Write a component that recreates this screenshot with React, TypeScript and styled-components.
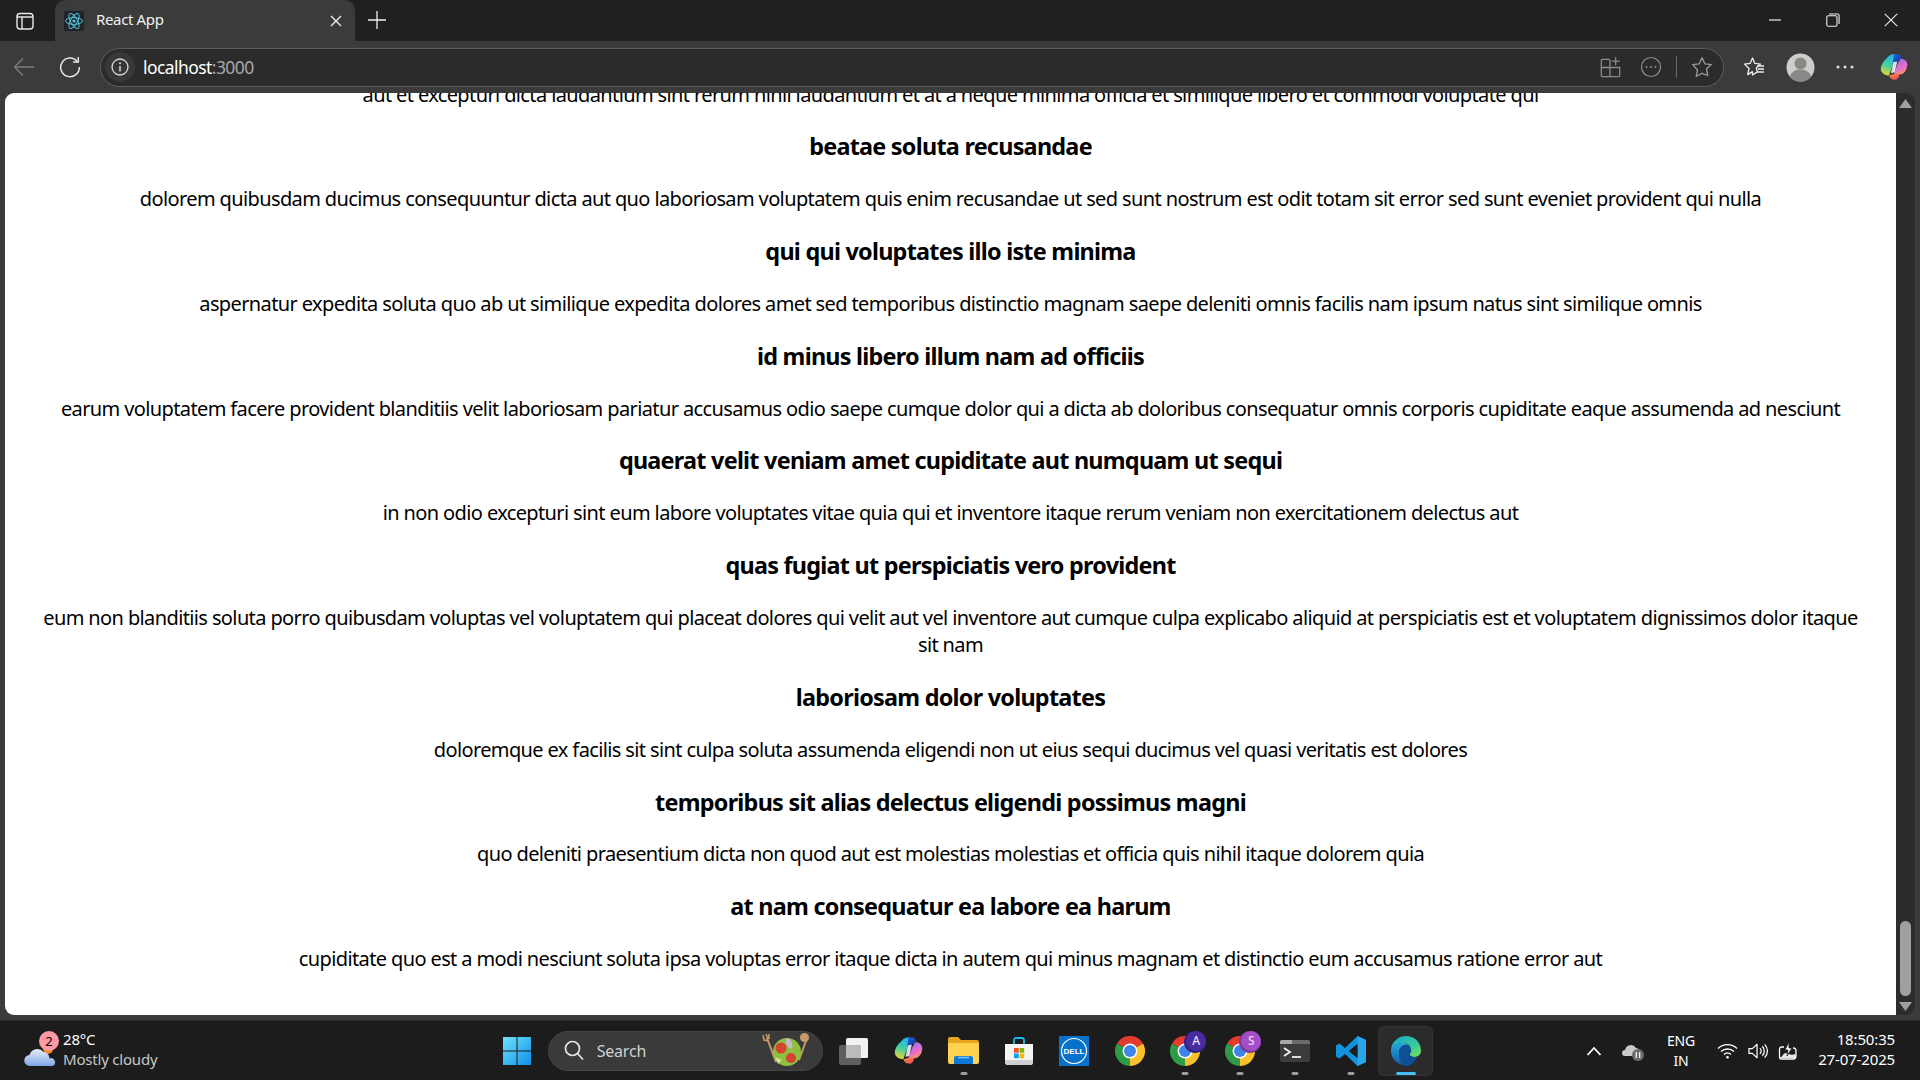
import React from "react";
import styled, { createGlobalStyle } from "styled-components";

const Global = createGlobalStyle`
  html, body { margin: 0; padding: 0; height: 100%; overflow: hidden; background: #3b3b3b; }
  #root { height: 100%; }
  * { box-sizing: border-box; }
`;

const FONT = `"Noto Sans", "Open Sans", sans-serif`;

const Shell = styled.div`
  width: 1920px; height: 1080px; display: flex; flex-direction: column;
  font-family: ${FONT}; background: #3b3b3b; overflow: hidden;
`;
const TabStrip = styled.div`
  height: 41px; flex: none; background: #202020; display: flex; align-items: stretch; color: #fff;
`;
const SidebarBtn = styled.div`
  width: 55px; flex: none; display: flex; align-items: center; justify-content: center; padding-right: 6px;
`;
const Tab = styled.div`
  width: 300px; flex: none; background: #3b3b3b; border-radius: 10px 10px 0 0; display: flex;
  align-items: center; padding: 0 13px 0 9px; position: relative;
`;
const TabTitle = styled.span`
  font-size: 15px; letter-spacing: -0.35px; color: #f2f2f2; margin-left: 12px; flex: 1; position: relative; top: -2px;
`;
const NewTab = styled.div`
  width: 44px; flex: none; display: flex; align-items: center; justify-content: center; padding-bottom: 2px;
`;
const Spacer = styled.div`flex: 1;`;
const WinControls = styled.div`
  display: flex; align-items: center; width: 174px; flex: none; padding-bottom: 2px;
`;
const WinBtn = styled.div`
  width: 58px; display: flex; align-items: center; justify-content: center;
`;
const Toolbar = styled.div`
  height: 52px; flex: none; background: #3b3b3b; display: flex; align-items: center; position: relative;
`;
const NavBtn = styled.div`
  width: ${p => p.$w || 45}px; flex: none; display: flex; align-items: center; justify-content: center;
`;
const AddressBar = styled.div`
  width: 1624px; height: 39px; flex: none; margin-left: 8px; border: 1px solid #5e5e5e; border-radius: 20px;
  background: #2b2b2b; display: flex; align-items: center; padding: 0 10px 0 4px;
`;
const InfoBadge = styled.div`
  width: 30px; height: 30px; border-radius: 50%; background: #383838; flex: none;
  display: flex; align-items: center; justify-content: center;
`;
const Url = styled.div`
  margin-left: 8px; font-size: 17.5px; letter-spacing: -0.57px; color: #fff; flex: 1;
  span { color: #a8a8a8; }
`;
const AddrIcons = styled.div`display: flex; align-items: center; gap: 14px;`;
const ExtSlot = styled.div`display: flex; margin-right: 4px;`;
const Divider = styled.div`width: 1px; height: 22px; background: #6a6a6a;`;
const ToolRight = styled.div`
  display: flex; align-items: center; flex: 1; padding: 0 13px 0 19px;
`;
const Slot = styled.div`width: ${p => p.$w}px; flex: none; display: flex;`;
const Viewport = styled.div`
  height: 922px; flex: none; display: flex; padding-left: 5px; padding-right: 5px;
`;
const Page = styled.main`
  flex: 1; background: #fff; border-radius: 9px 0 0 9px; overflow: hidden; padding: 0 28px;
  text-align: center; color: #000; letter-spacing: -0.62px;
`;
const Para = styled.p`
  font-size: 20px; line-height: 27px; margin: 0 0 23.9px;
  &:first-child { margin-top: -12.5px; }
`;
const Title = styled.h3`
  font-size: 23.4px; line-height: 31.4px; font-weight: 700; margin: 0 0 22.4px; letter-spacing: -0.75px;
`;
const Scrollbar = styled.div`
  width: 19px; flex: none; background: #2c2c2c; border-radius: 0 9px 9px 0; display: flex; flex-direction: column;
  align-items: center; justify-content: space-between; padding: 6px 0 4px;
`;
const Thumb = styled.div`
  width: 11px; height: 75px; border-radius: 6px; background: #9f9f9f; margin-top: auto; margin-bottom: 6px;
`;
const Taskbar = styled.footer`
  height: 60px; margin-top: 5px; flex: none; background: #1c1c1c; display: grid; grid-template-columns: 1fr auto 1fr;
  align-items: center; color: #fff; border-top: 1px solid #2a2a2a;
`;
const Weather = styled.div`display: flex; align-items: center; padding-left: 24px; gap: 7px;`;
const WeatherIcon = styled.div`width: 32px; height: 40px; position: relative; flex: none;`;
const Badge = styled.span`
  position: absolute; left: 15px; top: 0; width: 20px; height: 20px; border-radius: 50%; background: #ff99a4;
  color: #000; font-size: 13px; line-height: 20px; text-align: center;
`;
const WeatherText = styled.div`
  font-size: 15px; line-height: 20px; letter-spacing: -0.2px; padding-bottom: 4px;
  div + div { color: #c8c8c8; }
`;
const Center = styled.div`display: flex; align-items: center; height: 100%; padding-left: 4.5px;`;
const StartBtn = styled.div`width: 56.5px; display: flex; align-items: center; justify-content: center; padding-right: 4.5px;`;
const SearchBox = styled.div`
  width: 275px; height: 40px; border-radius: 20px; background: #3a3a3a; border: 1px solid #454545;
  display: flex; align-items: center; padding: 0 10px 0 15px; margin-right: 3px;
`;
const SearchText = styled.span`
  flex: 1; margin-left: 13px; font-size: 16px; letter-spacing: -0.2px; color: #d0d0d0;
`;
const Cell = styled.div`
  width: 55.25px; height: 50px; position: relative; display: flex; align-items: center; justify-content: center;
  border-radius: 6px; background: ${p => (p.$active ? "#2b2b2b" : "transparent")};
  ${p => p.$active && "box-shadow: inset 0 0 0 1px #333;"}
`;
const Dot = styled.span`
  position: absolute; bottom: 1px; left: 50%; transform: translateX(-50%); height: 3px; border-radius: 2px;
  width: ${p => (p.$active ? 20 : 7)}px; background: ${p => (p.$active ? "#47bdf5" : "#9c9c9c")};
`;
const Tray = styled.div`
  display: flex; align-items: center; justify-content: flex-end; padding-right: 25px; height: 100%;
`;
const TrayBtn = styled.div`
  width: ${p => p.$w}px; display: flex; align-items: center; justify-content: center; flex: none;
`;
const Lang = styled.div`
  width: 50px; margin-left: 3px; text-align: center; font-size: 14px; line-height: 20px; letter-spacing: -0.2px;
`;
const Clock = styled.div`
  width: 88px; text-align: right; font-size: 15px; line-height: 20px; letter-spacing: -0.15px; padding-bottom: 4px;
`;

const rows: [string, string][] = [
  ["beatae soluta recusandae", "dolorem quibusdam ducimus consequuntur dicta aut quo laboriosam voluptatem quis enim recusandae ut sed sunt nostrum est odit totam sit error sed sunt eveniet provident qui nulla"],
  ["qui qui voluptates illo iste minima", "aspernatur expedita soluta quo ab ut similique expedita dolores amet sed temporibus distinctio magnam saepe deleniti omnis facilis nam ipsum natus sint similique omnis"],
  ["id minus libero illum nam ad officiis", "earum voluptatem facere provident blanditiis velit laboriosam pariatur accusamus odio saepe cumque dolor qui a dicta ab doloribus consequatur omnis corporis cupiditate eaque assumenda ad nesciunt"],
  ["quaerat velit veniam amet cupiditate aut numquam ut sequi", "in non odio excepturi sint eum labore voluptates vitae quia qui et inventore itaque rerum veniam non exercitationem delectus aut"],
  ["quas fugiat ut perspiciatis vero provident", "eum non blanditiis soluta porro quibusdam voluptas vel voluptatem qui placeat dolores qui velit aut vel inventore aut cumque culpa explicabo aliquid at perspiciatis est et voluptatem dignissimos dolor itaque sit nam"],
  ["laboriosam dolor voluptates", "doloremque ex facilis sit sint culpa soluta assumenda eligendi non ut eius sequi ducimus vel quasi veritatis est dolores"],
  ["temporibus sit alias delectus eligendi possimus magni", "quo deleniti praesentium dicta non quod aut est molestias molestias et officia quis nihil itaque dolorem quia"],
  ["at nam consequatur ea labore ea harum", "cupiditate quo est a modi nesciunt soluta ipsa voluptas error itaque dicta in autem qui minus magnam et distinctio eum accusamus ratione error aut"],
];

const Copilot = ({ size = 26, uid }: { size?: number; uid: string }) => (
  <svg width={size} height={size} viewBox="0 0 28 28">
    <defs>
      <linearGradient id={uid + "A"} x1="0.5" y1="0" x2="0.3" y2="1"><stop offset="0" stopColor="#1fb6ee" /><stop offset="0.5" stopColor="#45d2a0" /><stop offset="1" stopColor="#f2d52f" /></linearGradient>
      <linearGradient id={uid + "B"} x1="0.2" y1="0" x2="0.8" y2="1"><stop offset="0" stopColor="#1c63e0" /><stop offset="1" stopColor="#12308f" /></linearGradient>
      <linearGradient id={uid + "C"} x1="0.3" y1="0" x2="0.7" y2="1"><stop offset="0" stopColor="#a56cf0" /><stop offset="0.6" stopColor="#e86fc8" /><stop offset="1" stopColor="#f79a4b" /></linearGradient>
      <linearGradient id={uid + "D"} x1="0" y1="0" x2="1" y2="1"><stop offset="0" stopColor="#f7923b" /><stop offset="1" stopColor="#ee3f5d" /></linearGradient>
    </defs>
    <path d="M9 3 C11 1.300 14 1.200 15 1.500 L13 11 L9 22.500 C5 22.500 1 19.800 .8 16.500 C.6 13 3 9 5 7 C6.500 5.700 7.500 4.500 9 3Z" fill={`url(#${uid}A)`} />
    <path d="M14 1.500 H18 C20 1.500 21 3.500 21.500 6 L18 8 L15 11 L12.500 11Z" fill={`url(#${uid}B)`} />
    <path d="M20.500 6 C24 5.500 27.500 8 27.300 12 C27 17 24 21.500 19.500 21.500 H14 L17.500 11Z" fill={`url(#${uid}C)`} />
    <path d="M9 22.500 L14 21 H19.500 C19 25 17 27 14.500 26.800 C11.500 26.700 10 25 9 22.500Z" fill={`url(#${uid}D)`} />
    <path d="M13.400 9 L17.200 8.500 L14.800 19.500 L11 20Z" fill="#f4f0ff" opacity=".9" />
  </svg>
);

const ChromeLogo = () => (
  <svg width="30" height="30" viewBox="0 0 30 30">
    <path d="M15 15 L2 7.5 A15 15 0 0 1 28 7.5 Z" fill="#e33b2e" />
    <path d="M15 15 L28 7.5 A15 15 0 0 1 15 30 Z" fill="#fbc02d" />
    <path d="M15 15 L15 30 A15 15 0 0 1 2 7.5 Z" fill="#2e9b47" />
    <circle cx="15" cy="15" r="7.5" fill="#fff" />
    <circle cx="15" cy="15" r="6" fill="#3f84ea" />
  </svg>
);

const AvatarBadge = styled.span`
  position: absolute; left: 29px; top: 5px; width: 20px; height: 20px; border-radius: 50%;
  background: ${p => p.$bg}; box-shadow: -1px 1px 0 1px ${p => p.$shade};
  color: #e9dcf5; font-size: 12px; line-height: 20px; text-align: center; font-weight: 500;
`;

export default function App() {
  return (
    <Shell>
      <Global />
      <TabStrip>
        <SidebarBtn>
          <svg width="20" height="20" viewBox="0 0 20 20" fill="none" stroke="#e6e6e6" strokeWidth="1.4">
            <rect x="2" y="2.5" width="16" height="15.5" rx="3" />
            <path d="M2 6h16M7 6v12" />
          </svg>
        </SidebarBtn>
        <Tab>
          <svg width="20" height="20" viewBox="0 0 20 20" fill="none" stroke="#4fc3dc" strokeWidth="1">
            <rect width="20" height="20" rx="2" fill="#20232a" stroke="none" />
            <ellipse cx="10" cy="10" rx="8.5" ry="3.4" />
            <ellipse cx="10" cy="10" rx="8.5" ry="3.4" transform="rotate(60 10 10)" />
            <ellipse cx="10" cy="10" rx="8.5" ry="3.4" transform="rotate(120 10 10)" />
            <circle cx="10" cy="10" r="1.6" fill="#4fc3dc" stroke="none" />
          </svg>
          <TabTitle>React App</TabTitle>
          <svg width="12" height="12" viewBox="0 0 12 12" stroke="#f0f0f0" strokeWidth="1.3"><path d="M1 1l10 10M11 1L1 11" /></svg>
        </Tab>
        <NewTab>
          <svg width="18" height="18" viewBox="0 0 18 18" stroke="#f0f0f0" strokeWidth="1.3"><path d="M9 0v18M0 9h18" /></svg>
        </NewTab>
        <Spacer />
        <WinControls>
          <WinBtn><svg width="14" height="14" viewBox="0 0 14 14" stroke="#eee" strokeWidth="1.2"><path d="M1 7h12" /></svg></WinBtn>
          <WinBtn><svg width="14" height="14" viewBox="0 0 14 14" fill="none" stroke="#eee" strokeWidth="1.1"><rect x=".8" y="2.8" width="10.2" height="10.4" rx="1.5" /><path d="M3 1h8.5a1.6 1.6 0 0 1 1.6 1.6V11" /></svg></WinBtn>
          <WinBtn><svg width="14" height="14" viewBox="0 0 14 14" stroke="#eee" strokeWidth="1.1"><path d="M.8.8l12.4 12.4M13.2.8L.8 13.2" /></svg></WinBtn>
        </WinControls>
      </TabStrip>
      <Toolbar>
        <NavBtn $w={47}>
          <svg width="22" height="20" viewBox="0 0 22 20" fill="none" stroke="#7d7d7d" strokeWidth="1.3"><path d="M21 10H1.5M10 1.5L1.5 10l8.5 8.5" /></svg>
        </NavBtn>
        <NavBtn $w={45}>
          <svg width="22" height="22" viewBox="0 0 22 22" fill="none" stroke="#e8e8e8" strokeWidth="1.5"><path d="M18.2 5.5A9.3 9.3 0 1 0 20.3 11" /><path d="M19.3 1v5h-5.2" /></svg>
        </NavBtn>
        <AddressBar>
          <InfoBadge>
            <svg width="20" height="20" viewBox="0 0 20 20" fill="none" stroke="#dcdcdc" strokeWidth="1.3"><circle cx="10" cy="10" r="8" /><path d="M10 9v5.5" strokeWidth="1.5" /><circle cx="10" cy="6.3" r="1" fill="#dcdcdc" stroke="none" /></svg>
          </InfoBadge>
          <Url>localhost<span>:3000</span></Url>
          <AddrIcons>
            <ExtSlot>
              <svg width="23" height="23" viewBox="0 0 20 20" fill="none" stroke="#8c8c8c" strokeWidth="1.1"><path d="M3 3h5.5a1 1 0 0 1 1 1v6H2V4a1 1 0 0 1 1-1zM2 10h7.5v8H3a1 1 0 0 1-1-1zM9.500 10h8.500v7a1 1 0 0 1-1 1H9.500zM14.500 1v7M11 4.500h7" /></svg>
            </ExtSlot>
            <svg width="22" height="22" viewBox="0 0 22 22" fill="none" stroke="#8c8c8c" strokeWidth="1.2"><circle cx="11" cy="11" r="9.5" /><circle cx="6.500" cy="11" r="1" fill="#8c8c8c" stroke="none" /><circle cx="11" cy="11" r="1" fill="#8c8c8c" stroke="none" /><circle cx="15.500" cy="11" r="1" fill="#8c8c8c" stroke="none" /></svg>
            <Divider />
            <svg width="22" height="22" viewBox="0 0 22 22" fill="none" stroke="#9a9a9a" strokeWidth="1.3"><path d="M11 1.800l2.800 6 6.500.8-4.800 4.400 1.300 6.500L11 17.300l-5.800 3.200 1.300-6.500L1.700 8.600l6.500-.8z" strokeLinejoin="round" /></svg>
          </AddrIcons>
        </AddressBar>
        <ToolRight>
          <Slot $w={43}>
            <svg width="22" height="22" viewBox="0 0 22 22" fill="none" stroke="#eee" strokeWidth="1.3"><path d="M9.500 2l2.400 5.400 5.600.7-4.200 3.800 1.100 4-4.900 3.100-.1-3.400-4.700 3 1.300-6.100L1.500 8.100l5.600-.7zM14 10h7M15 13h6M14.500 16h6.500" strokeLinejoin="round" /></svg>
          </Slot>
          <Slot $w={50}>
            <svg width="29" height="29" viewBox="0 0 29 29"><circle cx="14.500" cy="14.500" r="14" fill="#cfcdca" /><circle cx="14.500" cy="10.500" r="6" fill="#8a8886" /><path d="M4 24a10.500 7.500 0 0 1 21 0 14 14 0 0 1-21 0z" fill="#8a8886" /></svg>
          </Slot>
          <Slot $w={44}>
            <svg width="18" height="4" viewBox="0 0 18 4" fill="#ddd"><circle cx="2" cy="2" r="1.500" /><circle cx="9" cy="2" r="1.500" /><circle cx="16" cy="2" r="1.500" /></svg>
          </Slot>
          <Copilot size={28} uid="cpt" />
        </ToolRight>
      </Toolbar>
      <Viewport>
        <Page>
          <Para>aut et excepturi dicta laudantium sint rerum nihil laudantium et at a neque minima officia et similique libero et commodi voluptate qui</Para>
          {rows.map(([t, b]) => (
            <React.Fragment key={t}>
              <Title>{t}</Title>
              <Para>{b}</Para>
            </React.Fragment>
          ))}
        </Page>
        <Scrollbar>
          <svg width="13" height="9" viewBox="0 0 13 9" fill="#9f9f9f"><path d="M6.500 0L13 9H0z" /></svg>
          <Thumb />
          <svg width="13" height="9" viewBox="0 0 13 9" fill="#9f9f9f"><path d="M0 0h13L6.500 9z" /></svg>
        </Scrollbar>
      </Viewport>
      <Taskbar>
        <Weather>
          <WeatherIcon>
            <svg width="32" height="40" viewBox="0 0 32 40">
              <defs><linearGradient id="cl" x1="0" y1="0" x2="0" y2="1"><stop offset="0" stopColor="#e6eefb" /><stop offset="1" stopColor="#7fa8e6" /></linearGradient></defs>
              <circle cx="24" cy="18" r="5" fill="#f08a1d" />
              <path d="M6 35a5.500 5.500 0 0 1-.5-11 8 8 0 0 1 14-3 6.500 6.500 0 0 1 6 6.500 4 4 0 0 1 3 7.500z" fill="url(#cl)" />
            </svg>
            <Badge>2</Badge>
          </WeatherIcon>
          <WeatherText>
            <div>28°C</div>
            <div>Mostly cloudy</div>
          </WeatherText>
        </Weather>
        <Center>
          <StartBtn>
            <svg width="30" height="30" viewBox="0 0 30 30">
              <defs><linearGradient id="wn" x1="0" y1="0" x2="1" y2="1"><stop offset="0" stopColor="#6fe3fb" /><stop offset="1" stopColor="#0f8fe8" /></linearGradient></defs>
              <path d="M1 1h13.500v13.500H1zM15.500 1H29v13.500H15.500zM1 15.500h13.500V29H1zM15.500 15.500H29V29H15.500z" fill="url(#wn)" />
            </svg>
          </StartBtn>
          <SearchBox>
            <svg width="20" height="21" viewBox="0 0 20 21" fill="none" stroke="#e6e6e6" strokeWidth="1.7"><circle cx="8.500" cy="8.500" r="7" /><path d="M13.500 13.500l5.500 6" /></svg>
            <SearchText>Search</SearchText>
            <svg width="52" height="38" viewBox="0 0 52 38">
              <path d="M7 6l9 24M39 28L47 6" stroke="#c89c6a" strokeWidth="2" fill="none" />
              <circle cx="44.500" cy="5.500" r="4.500" fill="#c89c6a" />
              <path d="M3 3l1 5 5 1M6 2l2 5M9 2l0 5" stroke="#c89c6a" strokeWidth="1.500" fill="none" />
              <circle cx="27" cy="20" r="14" fill="#8fbf3f" />
              <circle cx="21" cy="16" r="5.500" fill="#d6422f" />
              <circle cx="31" cy="26" r="5" fill="#d6422f" />
              <path d="M26 6c6 1 8 7 5 11-3-1-6-6-5-11z" fill="#c6b7d6" />
              <path d="M15 25l7 3-4 4z" fill="#cfe59a" />
            </svg>
          </SearchBox>
          <Cell>
            <svg width="30" height="28" viewBox="0 0 30 28"><rect x="1" y="8" width="22" height="20" rx="2" fill="#5e5e5e" /><rect x="8" y="1" width="22" height="20" rx="1.500" fill="#f1f1f1" /><path d="M8 8h15v13H8z" fill="#bbb" /></svg>
          </Cell>
          <Cell><Copilot size={29} uid="cpb" /></Cell>
          <Cell>
            <svg width="31" height="27" viewBox="0 0 31 27"><path d="M0 2a2 2 0 0 1 2-2h8l3 3h16a2 2 0 0 1 2 2v3H0z" fill="#e9a81c" /><path d="M0 6h31v19a2 2 0 0 1-2 2H2a2 2 0 0 1-2-2z" fill="#ffd34f" /><path d="M6 21a2 2 0 0 1 2-2h15a2 2 0 0 1 2 2v6H6z" fill="#1278d6" /><path d="M10 20.500h11" stroke="#7fc4f5" strokeWidth="1.500" /></svg>
            <Dot />
          </Cell>
          <Cell>
            <svg width="30" height="30" viewBox="0 0 30 30"><path d="M10 8V4a2 2 0 0 1 2-2h6a2 2 0 0 1 2 2v4" fill="none" stroke="#22b8e8" strokeWidth="1.800" /><path d="M1 8h28v18a3 3 0 0 1-3 3H4a3 3 0 0 1-3-3z" fill="#f5f5f5" /><path d="M1 26v-2h28v2a3 3 0 0 1-3 3H4a3 3 0 0 1-3-3z" fill="#cfcfcf" /><rect x="10" y="12" width="4.700" height="4.700" fill="#f25022" /><rect x="15.500" y="12" width="4.700" height="4.700" fill="#7fba00" /><rect x="10" y="17.500" width="4.700" height="4.700" fill="#00a4ef" /><rect x="15.500" y="17.500" width="4.700" height="4.700" fill="#ffb900" /></svg>
          </Cell>
          <Cell>
            <svg width="30" height="30" viewBox="0 0 30 30"><rect width="30" height="30" fill="#0672cb" /><circle cx="15" cy="15" r="12.500" fill="none" stroke="#fff" strokeWidth="1.200" /><text x="15" y="18" textAnchor="middle" fontFamily="Liberation Sans, sans-serif" fontWeight="700" fontSize="8" fill="#fff">DELL</text></svg>
          </Cell>
          <Cell><ChromeLogo /></Cell>
          <Cell><ChromeLogo /><AvatarBadge $bg="#4a2aa0" $shade="#33207a">A</AvatarBadge><Dot /></Cell>
          <Cell><ChromeLogo /><AvatarBadge $bg="#a54ec9" $shade="#7a3a98">S</AvatarBadge><Dot /></Cell>
          <Cell>
            <svg width="30" height="22" viewBox="0 0 30 22"><rect width="30" height="22" rx="2" fill="#3c3c3c" /><path d="M0 2a2 2 0 0 1 2-2h10v4H0z" fill="#a8a8a8" /><path d="M12 0h16a2 2 0 0 1 2 2v2H12z" fill="#6c6c6c" /><path d="M4 8l6 4-6 4" fill="none" stroke="#f0f0f0" strokeWidth="1.800" /><path d="M12 17h9" stroke="#f0f0f0" strokeWidth="1.800" /></svg>
            <Dot />
          </Cell>
          <Cell>
            <svg width="30" height="30" viewBox="0 0 30 30"><path d="M21.500 0L30 4v22l-8.500 4L9 18l-5.500 4.500L0 20.500V9.500L3.500 7.500 9 12zM21.500 8L13 15l8.500 7z" fill="#1292dc" /><path d="M21.500 0L30 4v22l-8.500 4z" fill="#2aa6ea" fillRule="evenodd" /><path d="M21.500 8L13 15l8.500 7z" fill="#1c1c1c" /></svg>
            <Dot />
          </Cell>
          <Cell $active>
            <svg width="30" height="30" viewBox="0 0 30 30">
              <defs>
                <linearGradient id="eg" x1="0" y1="0" x2="1" y2="1"><stop offset="0" stopColor="#1aa5d6" /><stop offset=".6" stopColor="#35c99a" /><stop offset="1" stopColor="#7fe35a" /></linearGradient>
                <linearGradient id="eb" x1="0" y1="0" x2="0" y2="1"><stop offset="0" stopColor="#27a9e0" /><stop offset="1" stopColor="#0c59a4" /></linearGradient>
              </defs>
              <path d="M15 0C23 0 30 6 30 14.500c0 4-3 6.500-6.500 6.500-2.500 0-5-1-5-2.500 0-1 1.500-1.500 1.500-4C20 10 16 7 12 7 7 7 2 9 0 13 1 6 7 0 15 0z" fill="url(#eg)" />
              <path d="M0 13c2-4 7-6 12-6 2 0 4 .7 5.500 2-5-1-9.500 2.500-9.500 8 0 5 3 10 8.500 12.500C7 30 0 23 0 15z" fill="url(#eb)" />
              <path d="M8 17c0-5.500 4.500-9 9.500-8C19 10 20 12 20 14.500c0 2.500-1.500 3-1.500 4 0 1.500 2.500 2.500 5 2.500 1 0 2-.2 3-.8C24 26 20 30 15 30c-4 0-7-5-7-13z" fill="#0f4f96" />
            </svg>
            <Dot $active />
          </Cell>
        </Center>
        <Tray>
          <TrayBtn $w={38}>
            <svg width="16" height="10" viewBox="0 0 16 10" fill="none" stroke="#fff" strokeWidth="1.800"><path d="M1.500 9L8 2l6.500 7" /></svg>
          </TrayBtn>
          <TrayBtn $w={40}>
            <svg width="22" height="20" viewBox="0 0 22 20"><path d="M3 15a3 3 0 0 1 0-6 6 6 0 0 1 11-2 4 4 0 0 1 4 5v3z" fill="#c9c9c9" /><circle cx="16" cy="14" r="6" fill="#6b6b6b" /><path d="M14.300 11v6M17.700 11v6" stroke="#fff" strokeWidth="1.200" /></svg>
          </TrayBtn>
          <Lang>ENG<br />IN</Lang>
          <TrayBtn $w={42}>
            <svg width="21" height="16" viewBox="0 0 21 16" fill="none" stroke="#fff" strokeWidth="1.400"><path d="M1 5.500a13.500 13.500 0 0 1 19 0M4 8.500a9.500 9.500 0 0 1 13 0M7 11.500a5 5 0 0 1 7 0" /><circle cx="10.500" cy="14.300" r="1.300" fill="#fff" stroke="none" /></svg>
          </TrayBtn>
          <TrayBtn $w={20}>
            <svg width="21" height="18" viewBox="0 0 21 18" fill="none" stroke="#fff" strokeWidth="1.300"><path d="M1 6.500h3.500L9.500 2v14l-5-4.500H1z" strokeLinejoin="round" /><path d="M12.500 6a4 4 0 0 1 0 6M15 4a7 7 0 0 1 0 10M17.500 2a10 10 0 0 1 0 14" /></svg>
          </TrayBtn>
          <TrayBtn $w={39}>
            <svg width="20" height="20" viewBox="0 0 20 20" fill="none" stroke="#fff" strokeWidth="1.300"><path d="M6 6H3.500A2 2 0 0 0 1.500 8v8a2 2 0 0 0 2 2H15a3 3 0 0 0 3-3v-5a3 3 0 0 0-3-3" /><path d="M1.500 17c3-1 4-5 6-5s5 3 10 1v4z" fill="#fff" stroke="none" opacity=".9" /><path d="M11 1L7 9h3l-1 6 5-8h-3z" fill="#fff" stroke="#1c1c1c" strokeWidth=".8" /></svg>
          </TrayBtn>
          <Clock>18:50:35<br />27-07-2025</Clock>
        </Tray>
      </Taskbar>
    </Shell>
  );
}
